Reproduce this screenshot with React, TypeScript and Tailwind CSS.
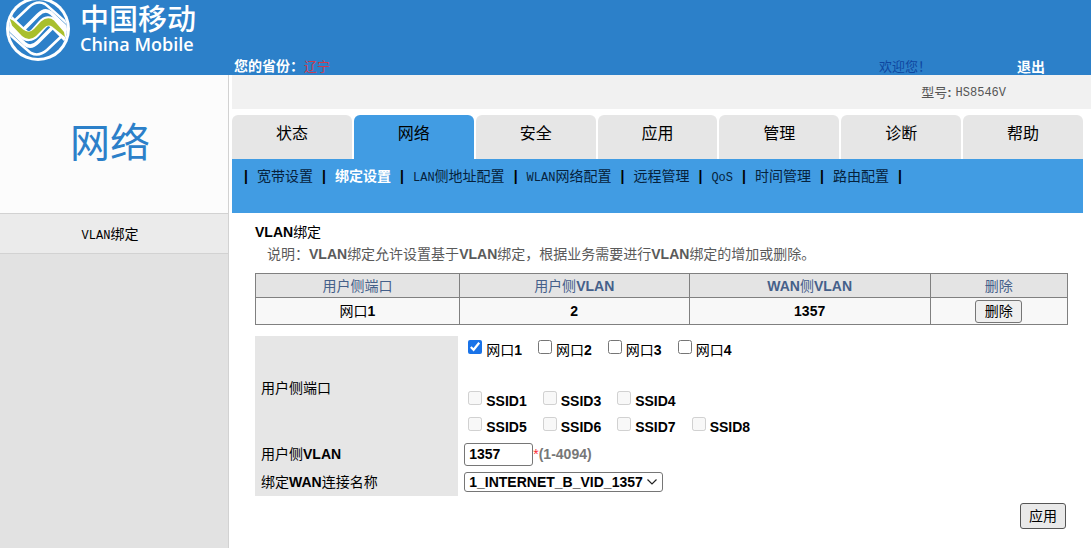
import { Fragment } from "react";

const cjk = "font-['Liberation_Sans','Noto_Sans_CJK_SC',sans-serif]";
const mono = "font-['Liberation_Mono','Noto_Sans_CJK_SC',monospace]";

const tabs = ["状态", "网络", "安全", "应用", "管理", "诊断", "帮助"];
const subTabs = ["宽带设置", "绑定设置", "LAN侧地址配置", "WLAN网络配置", "远程管理", "QoS", "时间管理", "路由配置"];
const ports = ["网口1", "网口2", "网口3", "网口4"];
const ssidRows = [
  ["SSID1", "SSID3", "SSID4"],
  ["SSID5", "SSID6", "SSID7", "SSID8"],
];

/** Text whose Latin runs are bold while the Chinese stays regular. */
function Mixed({ text }: { text: string }) {
  return (
    <>
      {text.split(/([A-Za-z0-9_]+)/).map((part, i) => (i % 2 ? <b key={i}>{part}</b> : <Fragment key={i}>{part}</Fragment>))}
    </>
  );
}

/** Text whose Latin runs are half-width monospace. */
function HalfWidth({ text }: { text: string }) {
  return (
    <>
      {text.split(/([A-Za-z0-9_]+)/).map((part, i) =>
        i % 2 ? (
          <span key={i} className={`${mono} text-xs`}>
            {part}
          </span>
        ) : (
          <Fragment key={i}>{part}</Fragment>
        ),
      )}
    </>
  );
}

function Stripes() {
  return (
    <>
      <path d="M8 25 L27 7 Q35 0 43 4 Q46 6 68 26" strokeWidth="2.6" />
      <path d="M18 33 L36 15 Q43 8 49 13 L68 31" strokeWidth="3.6" />
    </>
  );
}

function Logo() {
  return (
    <svg viewBox="0 0 72 62" className="h-[62px] w-[72px] shrink-0" aria-hidden="true">
      <defs>
        <clipPath id="disc">
          <circle cx="36" cy="29" r="29" />
        </clipPath>
      </defs>
      <circle cx="36" cy="29" r="32" fill="#fff" />
      <g clipPath="url(#disc)" fill="none" strokeLinejoin="round">
        <rect width="72" height="62" fill="#2c80c9" />
        <g stroke="#fff">
          <Stripes />
          <g transform="rotate(180 36 28.5)">
            <Stripes />
          </g>
        </g>
        <path d="M4 17 L21 33.5 Q27 39 33 33 L40 25 Q46 18 52 24 L68 40" stroke="#fff" strokeWidth="10" />
      </g>
      <path
        d="M8 19 L11 20.5 L21 29.5 Q27 34 32 29 L39 21.5 Q46 15.500 52 20.500 L62 32 L63 37 L50 26.500 Q46 24 42 28 L34 36 Q27 42 20 36 L10 25.500 Z"
        fill="#a9bf2c"
      />
    </svg>
  );
}

function Check({ label, disabled, checked }: { label: string; disabled?: boolean; checked?: boolean }) {
  return (
    <label className="flex items-start gap-1">
      <input
        type="checkbox"
        defaultChecked={checked}
        disabled={disabled}
        className="h-3.5 w-3.5 shrink-0 accent-[#1a73e8]"
      />
      <span className="pt-0.5 leading-4">
        <Mixed text={label} />
      </span>
    </label>
  );
}

export default function App() {
  return (
    <div className={`flex min-h-screen flex-col bg-white text-sm text-black ${cjk}`}>
      <header className="flex h-[75px] bg-[#2c80c9] text-white">
        <div className="flex w-[232px] shrink-0 items-start pl-0.5">
          <Logo />
          <div className="pt-1 pl-1.5">
            <div className="text-[29px] leading-8 font-medium">中国移动</div>
            <div className="font-['Open_Sans',sans-serif] text-lg leading-4 font-semibold">China Mobile</div>
          </div>
        </div>
        <div className="flex grow items-end justify-between pr-[46px] pl-0.5 leading-4 font-bold">
          <div>
            您的省份：<span className="text-[13px] font-normal text-[#d03a4c]">辽宁</span>
          </div>
          <div className="flex gap-[86px]">
            <span className="text-[13px] font-normal text-[#0f47a0]">欢迎您！</span>
            <a href="#logout">退出</a>
          </div>
        </div>
      </header>

      <div className="flex grow">
        <aside className="mr-[3px] w-[229px] shrink-0 border-r border-[#d2d2d2] bg-[#e2e2e2]">
          <h1 className="flex h-[138px] items-center justify-center bg-[#fcfcfc] pr-2 text-[40px] text-[#2c80c9]">网络</h1>
          <a href="#vlan" className="flex h-[41px] items-center justify-center border-y border-[#d2d2d2] bg-[#ebebeb] pr-2">
            <span>
              <HalfWidth text="VLAN绑定" />
            </span>
          </a>
        </aside>

        <div className="flex min-w-0 grow flex-col">
          <div className="flex h-[34px] items-center justify-end bg-[#f1f1f1] pt-0.5 pr-[85px] text-[13px] text-[#555]">
            <span className="mr-1">
              型号<b>:</b>
            </span>
            <span className={`${mono} text-xs`}>HS8546V</span>
          </div>

          <div className="mt-1.5 mr-2">
            <nav className="flex gap-0.5 text-base">
              {tabs.map((tab) => (
                <a
                  key={tab}
                  href="#tab"
                  className={`flex h-11 flex-1 justify-center rounded-t-md pt-[7px] ${tab === "网络" ? "bg-[#419ce3]" : "bg-[#e6e6e6]"}`}
                >
                  {tab}
                </a>
              ))}
            </nav>
            <nav className="flex h-[54px] items-start bg-[#419ce3] pt-[7px] pl-[3px] leading-5">
              <b className="w-[22px] text-center">|</b>
              {subTabs.map((tab) => (
                <Fragment key={tab}>
                  <a href="#sub" className={tab === "绑定设置" ? "font-bold text-white" : "text-[#06223c]"}>
                    <HalfWidth text={tab} />
                  </a>
                  <b className="w-[22px] text-center">|</b>
                </Fragment>
              ))}
            </nav>
          </div>

          <main className="mr-[23px] ml-[23px] pt-[7px]">
            <h2 className="leading-6">
              <Mixed text="VLAN绑定" />
            </h2>
            <p className="pl-3 leading-5 text-[#5a5a5a]">
              <Mixed text="说明：VLAN绑定允许设置基于VLAN绑定，根据业务需要进行VLAN绑定的增加或删除。" />
            </p>

            <table className="mt-[9px] w-full table-fixed border-collapse text-center">
              <colgroup>
                <col className="w-[25.1%]" />
                <col className="w-[28.3%]" />
                <col className="w-[29.7%]" />
                <col className="w-[16.9%]" />
              </colgroup>
              <thead className="bg-[#e4e4e4] text-[#45608a]">
                <tr className="h-6">
                  {["用户侧端口", "用户侧VLAN", "WAN侧VLAN", "删除"].map((head) => (
                    <th key={head} className="border border-[#808080] p-0 font-normal">
                      <Mixed text={head} />
                    </th>
                  ))}
                </tr>
              </thead>
              <tbody className="bg-[#f8f8f8]">
                <tr className="h-[27px]">
                  {["网口1", "2", "1357"].map((cell) => (
                    <td key={cell} className="border border-[#808080] p-0">
                      <Mixed text={cell} />
                    </td>
                  ))}
                  <td className="border border-[#808080] p-0">
                    <button className="mx-auto block h-[23px] w-[47px] rounded-[3px] border border-[#767676] bg-[#efefef] leading-5">
                      删除
                    </button>
                  </td>
                </tr>
              </tbody>
            </table>

            <form className="mt-[11px]">
              <fieldset className="flex" aria-labelledby="ports">
                <div id="ports" className="flex w-1/4 shrink-0 items-center bg-[#e6e6e6] pl-1.5">
                  用户侧端口
                </div>
                <div className="pb-[5px] pl-2.5">
                  <div className="flex gap-4 pt-1">
                    {ports.map((port, i) => (
                      <Check key={port} label={port} checked={i === 0} />
                    ))}
                  </div>
                  <div className="flex flex-col gap-2 pt-[33px]">
                    {ssidRows.map((row) => (
                      <div key={row[0]} className="flex gap-4">
                        {row.map((ssid) => (
                          <Check key={ssid} label={ssid} disabled />
                        ))}
                      </div>
                    ))}
                  </div>
                </div>
              </fieldset>
              <div className="flex h-7 items-stretch">
                <label htmlFor="vlan" className="flex w-1/4 shrink-0 items-center bg-[#e6e6e6] pl-1.5">
                  <span>
                    <Mixed text="用户侧VLAN" />
                  </span>
                </label>
                <div className="flex items-center pl-1.5">
                  <input
                    id="vlan"
                    defaultValue="1357"
                    className="h-[23px] w-[69px] rounded-[3px] border border-[#767676] bg-white px-1 font-bold"
                  />
                  <span className="text-red-500">*</span>
                  <span className="font-bold text-[#777]">(1-4094)</span>
                </div>
              </div>
              <div className="flex h-7 items-stretch">
                <label htmlFor="wan" className="flex w-1/4 shrink-0 items-center bg-[#e6e6e6] pl-1.5">
                  <span>
                    <Mixed text="绑定WAN连接名称" />
                  </span>
                </label>
                <div className="flex items-center pl-1.5">
                  <div className="relative">
                    <select
                      id="wan"
                      className="block h-5 w-[199px] appearance-none rounded-[3px] border border-[#767676] bg-white pl-1 leading-4 font-bold"
                    >
                      <option>1_INTERNET_B_VID_1357</option>
                    </select>
                    <svg viewBox="0 0 10 6" className="pointer-events-none absolute top-[7px] right-1.5 h-1.5 w-2.5" aria-hidden="true">
                      <path d="M0.5 0.5 L5 5 L9.5 0.5" fill="none" stroke="#222" strokeWidth="1.2" />
                    </svg>
                  </div>
                </div>
              </div>
              <div className="flex justify-end pt-[7px] pr-0.5">
                <button type="button" className="h-[26px] w-[46px] rounded-[3px] border border-[#555] bg-[#e9e9e9]">
                  应用
                </button>
              </div>
            </form>
          </main>
        </div>
      </div>
    </div>
  );
}
